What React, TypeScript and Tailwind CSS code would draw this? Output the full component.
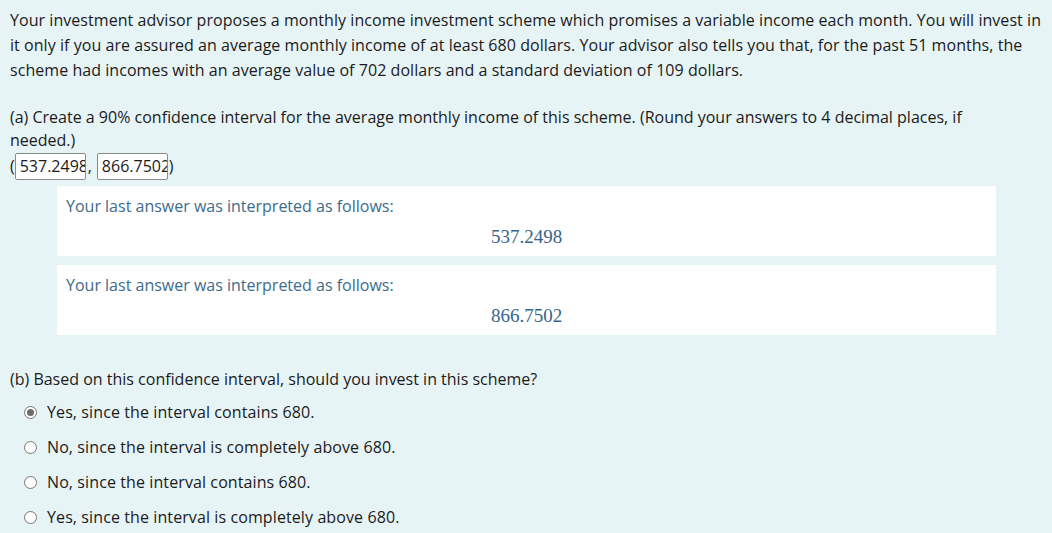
import React from 'react';

const options = [
  { label: 'Yes, since the interval contains 680.', checked: true },
  { label: 'No, since the interval is completely above 680.', checked: false },
  { label: 'No, since the interval contains 680.', checked: false },
  { label: 'Yes, since the interval is completely above 680.', checked: false },
];

const Interpreted = ({ value }: { value: string }) => (
  <div className="bg-white ml-[57px] w-[939px] h-[70px] pl-[9px] pt-[8px]">
    <div className="text-[#3d6b8c] leading-[24px]">Your last answer was interpreted as follows:</div>
    <div className="text-center pr-[9px] mt-[8px] text-[#35658a] text-[19px] leading-[22px]" style={{ fontFamily: '"Liberation Serif", serif' }}>
      {value}
    </div>
  </div>
);

const Radio = ({ checked }: { checked: boolean }) => (
  <span className="w-[13px] h-[13px] rounded-full border border-[#767676] bg-white flex items-center justify-center">
    {checked && <span className="w-[7px] h-[7px] rounded-full bg-[#6b6b6b]" />}
  </span>
);

export default function App() {
  return (
    <div className="w-[1052px] h-[533px] overflow-hidden bg-[#e7f4f6] text-[#1b1b1b] text-[16px]" style={{ fontFamily: '"Open Sans", "Noto Sans", sans-serif' }}>
      <div className="pl-[10px] pt-[8px] leading-[25px] tracking-[0.05px]">
        <div>Your investment advisor proposes a monthly income investment scheme which promises a variable income each month. You will invest in</div>
        <div>it only if you are assured an average monthly income of at least 680 dollars. Your advisor also tells you that, for the past 51 months, the</div>
        <div>scheme had incomes with an average value of 702 dollars and a standard deviation of 109 dollars.</div>
      </div>
      <div className="pl-[10px] mt-[23px] leading-[23px]">
        <div>(a) Create a 90% confidence interval for the average monthly income of this scheme. (Round your answers to 4 decimal places, if</div>
        <div>needed.)</div>
        <div className="flex items-center h-[28px]">
          <span>(</span>
          <span className="w-[71px] h-[27px] shrink-0 border border-[#8a8a8a] rounded-[2px] bg-white pl-[4px] overflow-hidden whitespace-nowrap leading-[25px]">537.2498</span>
          <span className="mx-[2px]">,</span>
          <span className="ml-[3px] w-[71px] h-[27px] shrink-0 border border-[#8a8a8a] rounded-[2px] bg-white pl-[4px] overflow-hidden whitespace-nowrap leading-[25px]">866.7502</span>
          <span className="pl-[1px]">)</span>
        </div>
      </div>
      <div className="mt-[6px] flex flex-col gap-[9px]">
        <Interpreted value="537.2498" />
        <Interpreted value="866.7502" />
      </div>
      <div className="pl-[10px] mt-[32px] leading-[24px]">(b) Based on this confidence interval, should you invest in this scheme?</div>
      <div className="pl-[24px] mt-[9px] flex flex-col gap-[11px]">
        {options.map((o) => (
          <label key={o.label} className="flex items-center gap-[10px] h-[24px] tracking-[0.1px]">
            <Radio checked={o.checked} />
            <span>{o.label}</span>
          </label>
        ))}
      </div>
    </div>
  );
}
